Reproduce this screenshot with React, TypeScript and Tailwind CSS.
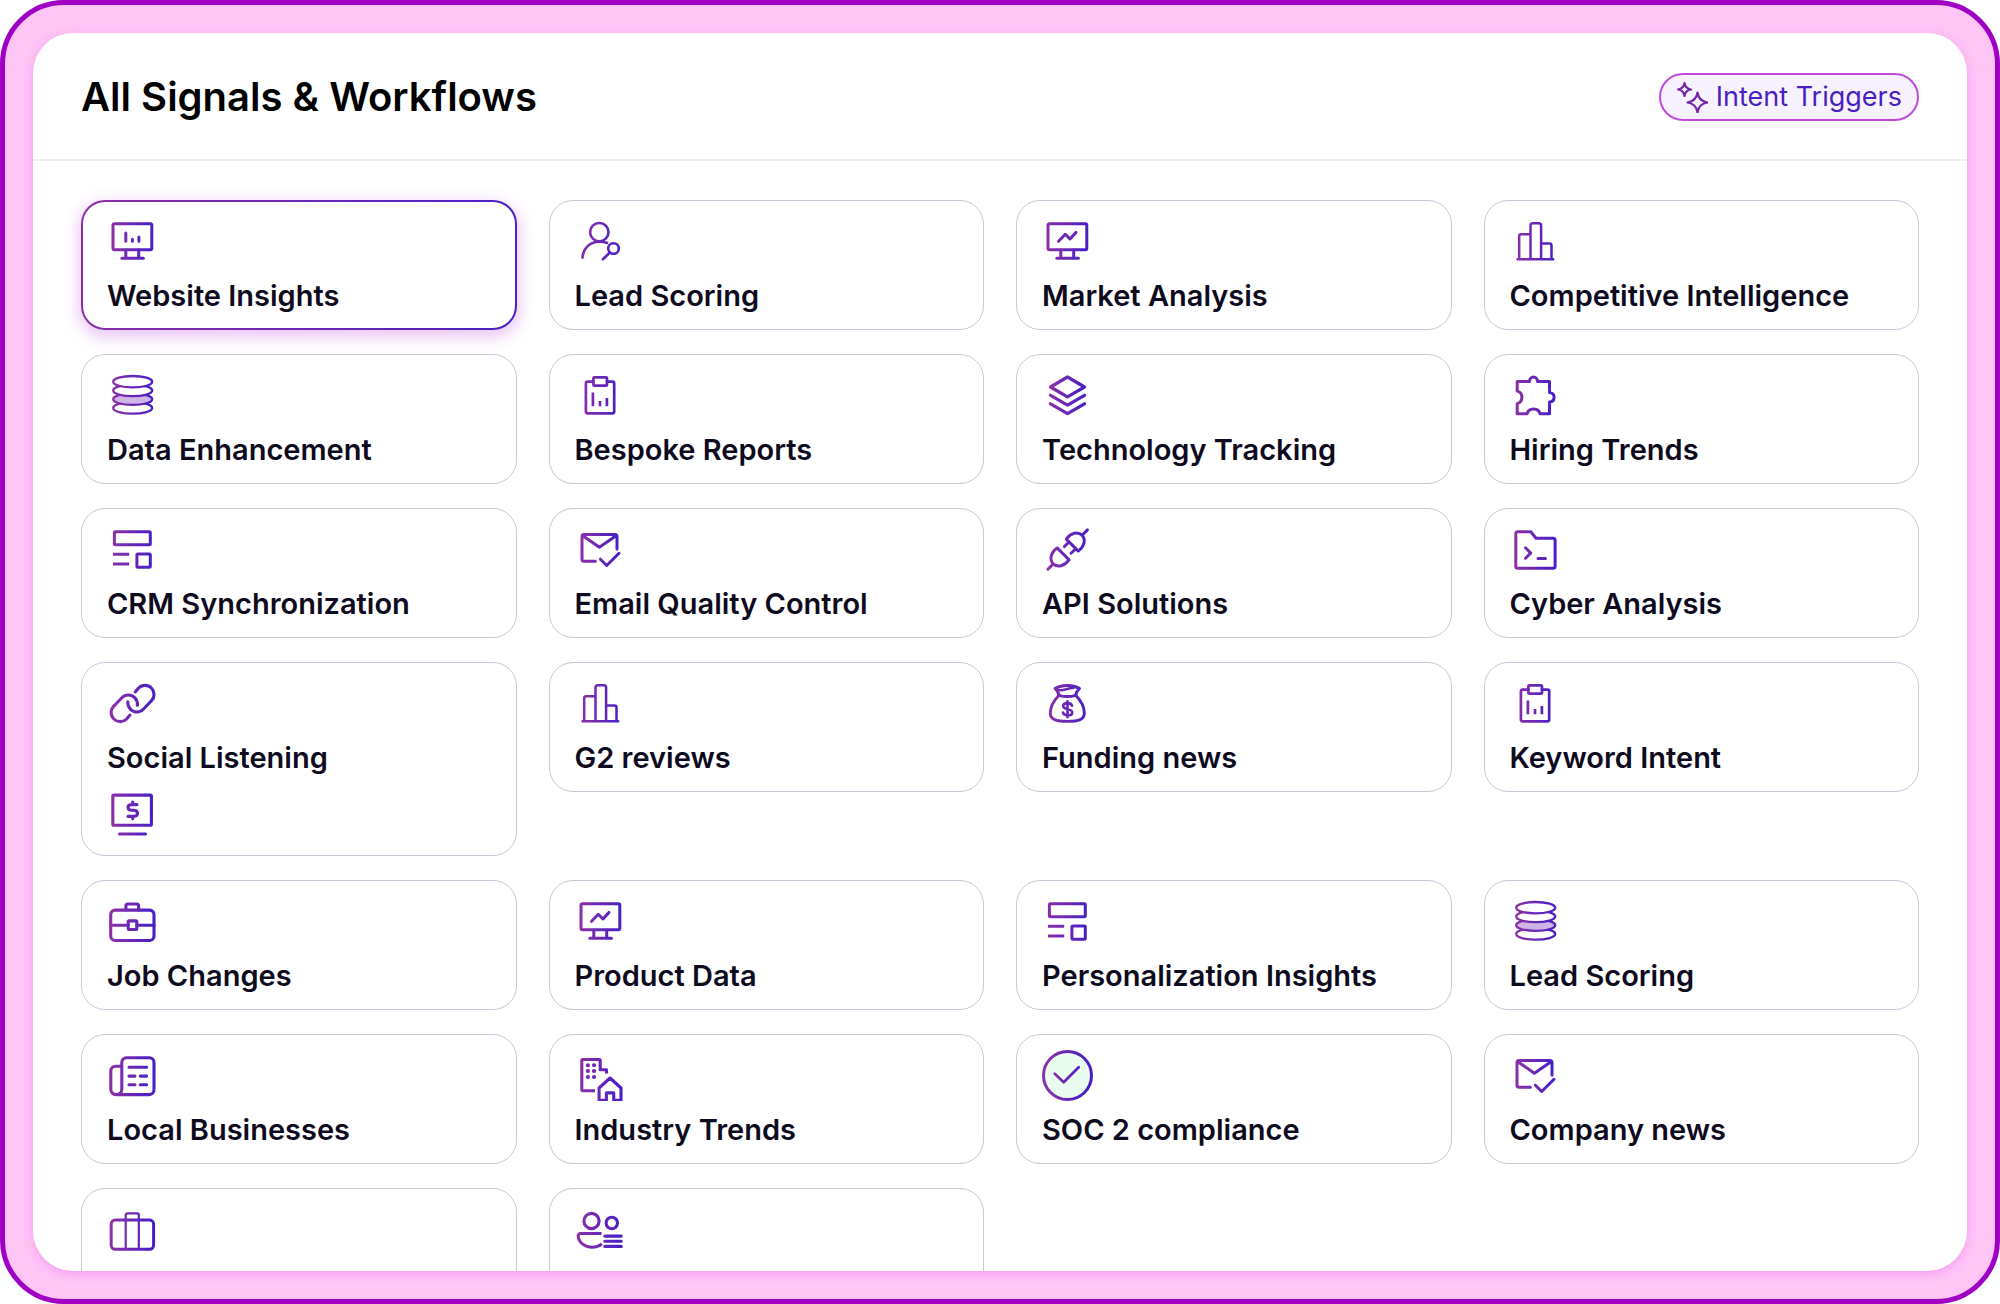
import { useId, type ReactNode } from "react";

type IconName =
  | "monitorBars"
  | "userSearch"
  | "monitorTrend"
  | "barChart"
  | "database"
  | "clipboard"
  | "layers"
  | "puzzle"
  | "layout"
  | "mailCheck"
  | "plug"
  | "terminalFolder"
  | "link"
  | "screenDollar"
  | "moneyBag"
  | "briefcase"
  | "newspaper"
  | "cityHome"
  | "checkCircle"
  | "suitcase"
  | "peopleList";

const monitor = (
  <>
    <rect x="6" y="7.7" width="38.800" height="26" rx="1.5" />
    <path d="M18.8 34v8M31.7 34v8M14.8 42.3h21.6" />
  </>
);

// All glyphs share a 51-unit square.
const glyphs: Record<IconName, ReactNode> = {
  monitorBars: (
    <g strokeWidth="3">
      {monitor}
      <path d="M18.8 17v8.3M25.4 23.3v2M31.9 21v4.3" />
    </g>
  ),
  monitorTrend: (
    <g strokeWidth="3">
      {monitor}
      <path d="M16.6 25.3l6.7-7 4.7 4.7 5.9-6.6" />
    </g>
  ),
  userSearch: (
    <g strokeWidth="2.6">
      <circle cx="24.3" cy="16.2" r="9.2" />
      <path d="M7.5 41.7C8 32.5 14.5 25.9 24 25.7c3-.1 5.800.2 8 1.300" />
      <circle cx="38.5" cy="32.5" r="5.3" />
      <path d="M34.9 36.5l-7 6.8" />
    </g>
  ),
  barChart: (
    <g strokeWidth="2.5">
      <path d="M9.2 43.3V20.2a2 2 0 0 1 2-2h9.3M20.5 43.3V9.5a2.3 2.3 0 0 1 2.3-2.3h6a2.3 2.3 0 0 1 2.3 2.3v33.8M31.2 27.4h8.3a2 2 0 0 1 2 2v13.9M7.5 43.3h35.7" />
    </g>
  ),
  database: (
    <g strokeWidth="2.3">
      <ellipse cx="25.7" cy="38" rx="19.5" ry="5.7" fill="#fff" />
      <ellipse cx="25.7" cy="29.2" rx="19.5" ry="5.7" fill="#d0b5e6" />
      <ellipse cx="25.7" cy="20.5" rx="19.5" ry="5.7" fill="#fff" />
      <ellipse cx="25.7" cy="11.7" rx="19.5" ry="5.7" fill="#fff" />
    </g>
  ),
  clipboard: (
    <g strokeWidth="2.7">
      <path d="M18.4 11.6h-5.7a1.8 1.8 0 0 0-1.8 1.8v28.2a1.8 1.8 0 0 0 1.8 1.8h24.7a1.8 1.8 0 0 0 1.8-1.8V13.4a1.8 1.8 0 0 0-1.8-1.8H32" />
      <rect x="18.4" y="7.3" width="13.6" height="8.4" rx="1" />
      <path d="M17.9 22.5v13.8M25 30.9v5.4M31.9 28v8.3" strokeLinecap="butt" />
    </g>
  ),
  layers: (
    <g strokeWidth="3.2">
      <path d="M25.5 7l17 10-17 9.9-17-9.9zM8.5 25.3l17 9.9 17-9.9M8.5 33.8l17 9.9 17-9.9" />
    </g>
  ),
  puzzle: (
    <g strokeWidth="3">
      <path d="M7.2 11.5h12.3c0-2.6 1.8-4.5 4-4.5s4 1.9 4 4.5h12v11c2.7.3 4.6 2 4.6 4.7s-1.9 4.5-4.6 4.8v11.7H30c-.6-3-3.2-4.8-6.4-4.8s-5.9 1.8-6.5 4.8H7.2V33.6c2.9-.6 4.7-3.2 4.7-6.3s-1.8-5.6-4.7-6.2z" />
    </g>
  ),
  layout: (
    <g strokeWidth="3">
      <rect x="7.4" y="7.7" width="35.9" height="13" rx="1" />
      <rect x="29.9" y="30.1" width="13.4" height="13.2" rx="1" />
      <path d="M6 30.3h16.2M6 40h16.2" strokeLinecap="butt" />
    </g>
  ),
  mailCheck: (
    <g strokeWidth="3">
      <path d="M20.3 37.3H9a2 2 0 0 1-2-2V12.4a2 2 0 0 1 2-2h31a2 2 0 0 1 2 2v12.5M7.8 11.7l16.6 11.6 16.6-11.6M25.4 35.2l6.3 6.3L44 29.3" />
    </g>
  ),
  plug: (
    <g strokeWidth="2.9">
      <path d="M5.9 45.2l5.3-5.3M15.1 23.9l12 12c-4.7 6.2-11.4 8-15.9 4-4.2-4.7-2.3-11.4 3.9-16z" />
      <path d="M45.4 5.9l-5.3 5.3M24.3 15.1l12 12c6-4.7 7.8-11.3 3.8-15.9-4.6-4.2-11.3-2.3-15.8 3.9zM27 18l-4.7 4.6M33.7 24.7L29 29.3" />
    </g>
  ),
  terminalFolder: (
    <g strokeWidth="3">
      <path d="M7.8 7.7h13l5.2 6.5h17.1a2 2 0 0 1 2 2v26a2 2 0 0 1-2 2H7.8a2 2 0 0 1-2-2V9.7a2 2 0 0 1 2-2zM15.5 23.8l5.2 5.3-5.2 5.2M28 34.5h7.4" />
    </g>
  ),
  link: (
    <g strokeWidth="3.1">
      <path d="M28.2 13.9l3.4-3.9a9 9 0 0 1 12.8 12.8l-8.1 8.5a9 9 0 0 1-12.8 0c-2-2-2.9-4.8-2.7-7.6" />
      <path d="M23 37.1L19.6 41A9 9 0 0 1 6.8 28.2l8.1-8.5a9 9 0 0 1 12.8 0c2 2 2.9 4.8 2.7 7.6" />
    </g>
  ),
  screenDollar: (
    <g strokeWidth="3.1">
      <rect x="5.8" y="8.1" width="38.6" height="30.2" rx="1" />
      <path d="M12.5 47h26M30 17.600h-5c-2.400 0-4 1-4 2.900s1.500 2.700 3.700 2.700h2c2.200 0 3.800 1.100 3.800 3.100s-1.600 3.100-4 3.100H21M25.700 15.100v2M25.700 29.800v2" />
    </g>
  ),
  moneyBag: (
    <g strokeWidth="2.9">
      <path d="M17 17.3C12 22.5 8.300 29 8.300 35c0 6.500 5.700 8.400 17.200 8.400S42.300 41.500 42.300 35c0-6-3.600-12.500-8.600-17.700" />
      <path d="M17 17.300c-.2-2.700-1.700-4.700-4-6.800 3.500-2 8-3 12.500-3s8.500 1 12 3c-2.200 2.100-3.600 4.100-3.800 6.800-5.300 1.600-11.500 1.600-16.700 0z" />
      <path d="M13.500 10.600c2.500 2 5.500 2 9 1.200 3.500-.7 6-1.800 9-2M30 27.700c-.6-1.800-2.300-2.600-4.500-2.600-2.400 0-4.300 1.100-4.300 3 0 4.500 9 1.700 9 6.300 0 2-2 3-4.600 3-2.300 0-4.200-.9-4.600-2.800M25.500 23.300v16" strokeWidth="2.600" />
    </g>
  ),
  briefcase: (
    <g strokeWidth="3.1">
      <rect x="3.7" y="14.1" width="43.3" height="30.4" rx="4.5" />
      <path d="M18.9 14V10a2 2 0 0 1 2-2h8.7a2 2 0 0 1 2 2v4M3.7 29.3h17.5M29.8 29.3H47" />
      <rect x="21.2" y="24.9" width="8.6" height="8.6" rx="1" />
    </g>
  ),
  newspaper: (
    <g strokeWidth="3.1">
      <path d="M9 44.6h33.2c2.8 0 4.8-2 4.8-4.8V12.6c0-2.8-2-4.8-4.8-4.8H19.6c-2.8 0-4.8 2-4.8 4.8v26.4c0 3.4-2.2 5.6-5.500 5.600s-5.500-2.200-5.500-5.600V21c0-2.800 2-4.800 4.800-4.800h6.200M22 17.300h17.600M22 26.100h5.900M33.300 26.100h6.300M22 34.800h5.900M33.300 34.800h6.300" />
    </g>
  ),
  cityHome: (
    <g strokeWidth="3.1">
      <path d="M20 40.700H8a1.200 1.200 0 0 1-1.200-1.200V10.700A1.200 1.200 0 0 1 8 9.500h16a1.200 1.200 0 0 1 1.200 1.200v9.100h6.300v3.700" strokeLinecap="butt" />
      <path d="M24.1 38l10.900-10 11 10v12.200h-7.300v-7.300h-7.300v7.300h-7.300z" />
      <path d="M12.700 15.200h.3M18.900 15.200h.3M12.700 21.100h.3M18.900 21.100h.3M12.700 27h.3M18.900 27h.3" strokeWidth="4" />
    </g>
  ),
  checkCircle: (
    <g strokeWidth="3">
      <circle cx="25.5" cy="25.5" r="24" fill="#e8fdef" />
      <path d="M12.7 23.7l9 8.5 15-15" strokeWidth="2.7" />
    </g>
  ),
  suitcase: (
    <g strokeWidth="3">
      <rect x="4.2" y="16.1" width="42.4" height="29.2" rx="4" />
      <path d="M18.7 45V11a1.7 1.7 0 0 1 1.700-1.700h9.700a1.700 1.700 0 0 1 1.700 1.700v34" strokeWidth="2.200" />
    </g>
  ),
  peopleList: (
    <g strokeWidth="3.1">
      <circle cx="16.5" cy="17" r="7.6" />
      <circle cx="36.8" cy="19" r="5.7" />
      <path d="M26.5 29.5H5.5c-1.500 0-2.400 1-2.300 2.500.4 6.700 6.800 11.200 13.800 11.200 4 0 7.300-1.200 9.800-3.400" strokeLinecap="butt" />
      <path d="M29.8 32.100h16.400M29.800 37.200h16.400M29.800 42.400h16.400" />
    </g>
  ),
};

function Icon({ name }: { name: IconName }) {
  const id = useId();
  return (
    <svg
      viewBox="0 0 51 51"
      className="size-[51px] shrink-0"
      fill="none"
      stroke={`url(#${id})`}
      strokeLinecap="round"
      strokeLinejoin="round"
      aria-hidden="true"
    >
      <defs>
        <linearGradient id={id} gradientUnits="userSpaceOnUse" x1="5" y1="25" x2="44" y2="25">
          <stop stopColor="#8b2fa6" />
          <stop offset="1" stopColor="#4a1fc6" />
        </linearGradient>
      </defs>
      {glyphs[name]}
    </svg>
  );
}

interface Signal {
  label: string;
  icon: IconName;
  extraIcon?: IconName;
  active?: boolean;
}

const signals: Signal[] = [
  { label: "Website Insights", icon: "monitorBars", active: true },
  { label: "Lead Scoring", icon: "userSearch" },
  { label: "Market Analysis", icon: "monitorTrend" },
  { label: "Competitive Intelligence", icon: "barChart" },
  { label: "Data Enhancement", icon: "database" },
  { label: "Bespoke Reports", icon: "clipboard" },
  { label: "Technology Tracking", icon: "layers" },
  { label: "Hiring Trends", icon: "puzzle" },
  { label: "CRM Synchronization", icon: "layout" },
  { label: "Email Quality Control", icon: "mailCheck" },
  { label: "API Solutions", icon: "plug" },
  { label: "Cyber Analysis", icon: "terminalFolder" },
  { label: "Social Listening", icon: "link", extraIcon: "screenDollar" },
  { label: "G2 reviews", icon: "barChart" },
  { label: "Funding news", icon: "moneyBag" },
  { label: "Keyword Intent", icon: "clipboard" },
  { label: "Job Changes", icon: "briefcase" },
  { label: "Product Data", icon: "monitorTrend" },
  { label: "Personalization Insights", icon: "layout" },
  { label: "Lead Scoring", icon: "database" },
  { label: "Local Businesses", icon: "newspaper" },
  { label: "Industry Trends", icon: "cityHome" },
  { label: "SOC 2 compliance", icon: "checkCircle" },
  { label: "Company news", icon: "mailCheck" },
  { label: "", icon: "suitcase" },
  { label: "", icon: "peopleList" },
];

const activeCard =
  "border-2 border-transparent px-6 pt-3.5 pb-4 [background:linear-gradient(#fff,#fff)_padding-box,linear-gradient(90deg,#8b2fa6,#4a1fc6)_border-box] shadow-[0_5px_16px_2px_rgba(190,70,225,0.32)]";

const idleCard = "border border-[#c8c8d8] bg-white px-[25px] pt-[15px] pb-[17px]";

function SignalCard({ label, icon, extraIcon, active }: Signal) {
  return (
    <button
      type="button"
      aria-pressed={!!active}
      className={`flex w-full flex-col items-start gap-[13px] rounded-3xl text-left ${active ? activeCard : idleCard}`}
    >
      <Icon name={icon} />
      <span className="min-h-8 text-[29px] leading-8 font-semibold whitespace-nowrap text-[#0f0b1f]">{label}</span>
      {extraIcon && <Icon name={extraIcon} />}
    </button>
  );
}

function Sparkles() {
  return (
    <svg
      viewBox="0 0 32 32"
      className="size-8"
      fill="none"
      stroke="#7428a8"
      strokeWidth="2.2"
      strokeLinejoin="round"
      aria-hidden="true"
    >
      <path d="M8.5 2c.6 4 2.5 5.900 6.500 6.500-4 .6-5.900 2.500-6.500 6.500-.6-4-2.500-5.900-6.500-6.500 4-.6 5.900-2.500 6.500-6.500z" />
      <path d="M21.5 11.500c.9 6 4 9.100 10 10-6 .9-9.100 4-10 10-.9-6-4-9.100-10-10 6-.9 9.100-4 10-10z" />
    </svg>
  );
}

export default function App() {
  return (
    <div className="h-screen bg-white font-['Inter',sans-serif]">
      <div className="h-full rounded-[64px] border-[5px] border-[#a000c4] bg-[#fec5f5] p-7">
        <main className="flex h-full flex-col overflow-hidden rounded-[40px] bg-white shadow-[0_3px_10px_rgba(235,90,240,0.35)]">
          <header className="flex h-32 shrink-0 items-center justify-between border-b-2 border-[#eeeeee] px-12 pt-0.5">
            <h1 className="text-[40px] leading-12 font-semibold text-black">All Signals &amp; Workflows</h1>
            <button
              type="button"
              className="flex h-12 items-center gap-2 rounded-full border-2 border-[#c248de] bg-[#f7f2fe] px-[15px] text-[27px] leading-8 text-[#4a1fbf]"
            >
              <Sparkles />
              Intent Triggers
            </button>
          </header>
          <section className="grid grid-cols-4 items-start gap-x-8 gap-y-6 px-12 pt-[39px]">
            {signals.map((signal, index) => (
              <SignalCard key={index} {...signal} />
            ))}
          </section>
        </main>
      </div>
    </div>
  );
}
